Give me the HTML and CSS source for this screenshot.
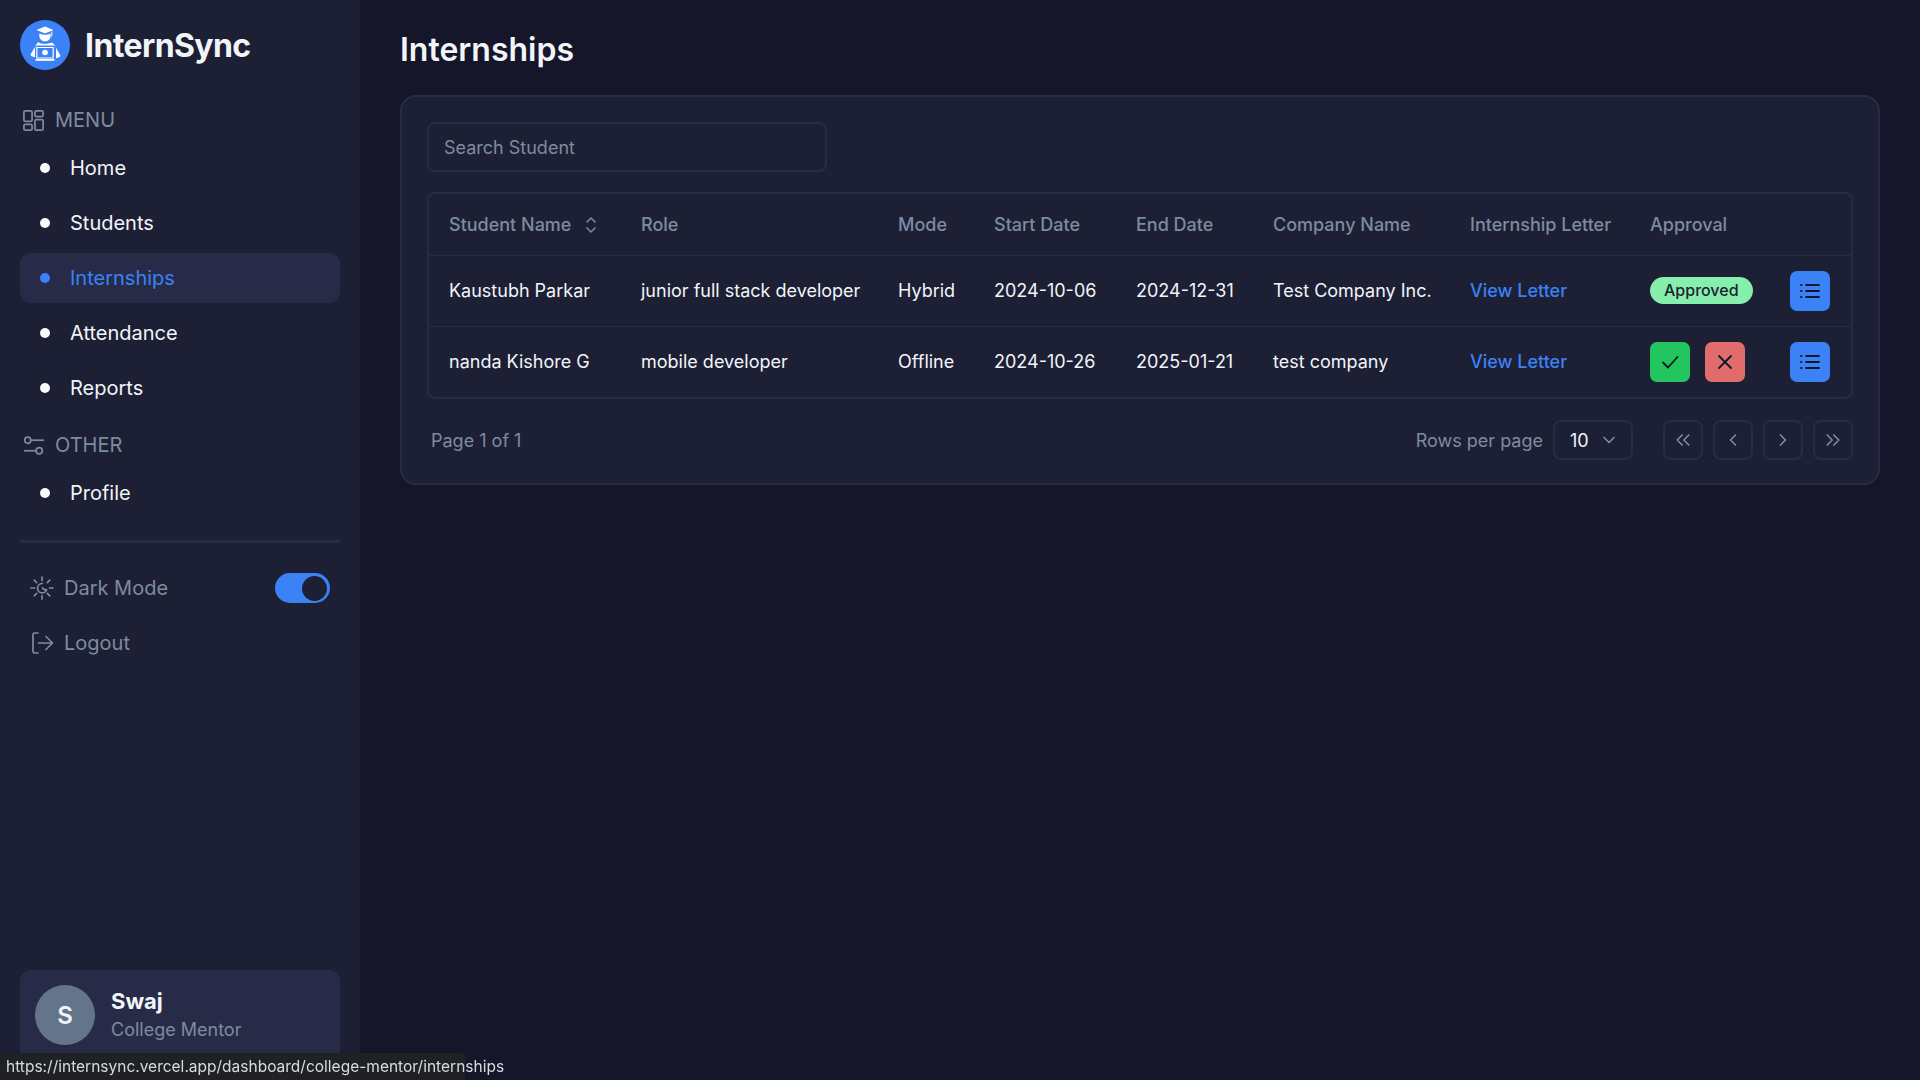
FILE: index.html
```html
<!DOCTYPE html>
<html>
<head>
	<title>InternSync</title>
	<link rel="stylesheet" href="styles.css">
</head>
<body>

	<div class="app">
		<aside class="sidebar">
			<div class="brand">
				<svg class="brand-logo" viewBox="0 0 50 50">
					<circle cx="25" cy="25" r="25" fill="#3b82f6"/>
					<path d="M25 6.5l8.5 3.6-8.5 3.4-8.5-3.4z" fill="#fff"/>
					<path d="M31.8 11.5v5" stroke="#fff" stroke-width="1" fill="none"/>
					<path d="M19.6 13.4c1.6.9 3.4 1.3 5.4 1.3s3.8-.4 5.4-1.3c.3.8.4 1.5.4 2.2a5.8 5.8 0 0 1-11.6 0c0-.7.1-1.4.4-2.2z" fill="#fff"/>
					<path d="M18.7 22.5c1.7 1 3.8 1.4 6.3 1.4s4.600-.4 6.300-1.400c1.500.5 2.500 1.400 3.200 2.700l5.500 9.500c.6 1.100.4 2.100-.7 2.500l-3.300 1V28c0-1.500-1-2.500-2.500-2.500H17.500c-1.500 0-2.500 1-2.500 2.500v9.200l-3.300-1c-1.100-.4-1.300-1.400-.7-2.500l5.500-9.500c.6-1.100 1.300-1.900 2.700-2.200z" fill="#fff"/>
					<rect x="16.500" y="27" width="17" height="11" rx="1" fill="#fff" opacity="0"/>
					<path d="M16.800 27.500h16.400v10.500H16.800z" fill="none" stroke="#fff" stroke-width="1.200"/>
					<circle cx="25" cy="32.500" r="2.800" fill="#fff"/>
					<rect x="15.500" y="39" width="19" height="1.800" fill="#fff"/>
				</svg>
				<span class="brand-name">InternSync</span>
			</div>

			<div class="nav-head">
				<svg class="icon-head" viewBox="0 0 24 24"><rect x="2" y="2" width="8.500" height="11" rx="1.500"/><rect x="13.500" y="2" width="8.500" height="6" rx="1.500"/><rect x="2" y="16" width="8.500" height="6" rx="1.500"/><rect x="13.500" y="11" width="8.500" height="11" rx="1.500"/></svg>
				MENU
			</div>
			<nav class="nav">
				<a class="nav-link"><span class="dot"></span>Home</a>
				<a class="nav-link"><span class="dot"></span>Students</a>
				<a class="nav-link active"><span class="dot"></span>Internships</a>
				<a class="nav-link"><span class="dot"></span>Attendance</a>
				<a class="nav-link"><span class="dot"></span>Reports</a>
			</nav>

			<div class="nav-head">
				<svg class="icon-head" viewBox="0 0 24 24"><circle cx="6" cy="6.500" r="3.200"/><path d="M9.500 6.500H23"/><circle cx="18" cy="17.500" r="3.200"/><path d="M14.500 17.500H2"/></svg>
				OTHER
			</div>
			<nav class="nav">
				<a class="nav-link"><span class="dot"></span>Profile</a>
			</nav>

			<div class="divider"></div>

			<div class="tool-row">
				<svg class="icon-tool" viewBox="0 0 24 24"><path d="M12 1v3.500M12 19.500V23M1 12h3.500M19.500 12H23M4.200 4.200l2.500 2.500M17.300 17.300l2.500 2.500M4.200 19.800l2.500-2.500M17.300 6.700l2.500-2.500"/><path d="M12.500 7.500a4.700 4.700 0 1 0 4.200 6.200 4 4 0 0 1-4.200-1.700"/></svg>
				<span>Dark Mode</span>
				<span class="toggle"><span class="toggle-knob"></span></span>
			</div>
			<div class="tool-row">
				<svg class="icon-tool" viewBox="0 0 24 24"><path d="M8 2H4.500C3.500 2 3 2.500 3 3.500v17c0 1 .5 1.500 1.500 1.500H8"/><path d="M8.500 12H22M16 5.500l6.500 6.500-6.500 6.500"/></svg>
				<span>Logout</span>
			</div>

			<div class="user-card">
				<div class="avatar">S</div>
				<div>
					<div class="user-name">Swaj</div>
					<div class="user-role">College Mentor</div>
				</div>
			</div>
		</aside>

		<main class="main">
			<h1 class="page-title">Internships</h1>

			<section class="card">
				<input class="search" type="text" placeholder="Search Student">

				<div class="table-wrap">
					<table class="table">
						<colgroup>
							<col class="c-name"><col class="c-role"><col class="c-mode"><col class="c-start"><col class="c-end"><col class="c-company"><col class="c-letter"><col class="c-approval"><col class="c-actions">
						</colgroup>
						<thead>
							<tr>
								<th>Student Name
									<svg class="icon-sort" viewBox="0 0 14 18"><path d="M2.500 6.500L7 2l4.500 4.500M2.500 11.500L7 16l4.500-4.500"/></svg>
								</th>
								<th>Role</th>
								<th>Mode</th>
								<th>Start Date</th>
								<th>End Date</th>
								<th>Company Name</th>
								<th>Internship Letter</th>
								<th>Approval</th>
								<th></th>
							</tr>
						</thead>
						<tbody>
							<tr>
								<td>Kaustubh Parkar</td>
								<td>junior full stack developer</td>
								<td>Hybrid</td>
								<td>2024-10-06</td>
								<td>2024-12-31</td>
								<td>Test Company Inc.</td>
								<td><a class="link">View Letter</a></td>
								<td><span class="badge">Approved</span></td>
								<td>
									<button class="btn btn-blue"><svg class="icon-btn" viewBox="0 0 24 24"><path d="M8 6h13M8 12h13M8 18h13M3 6h.5M3 12h.5M3 18h.5"/></svg></button>
								</td>
							</tr>
							<tr>
								<td>nanda Kishore G</td>
								<td>mobile developer</td>
								<td>Offline</td>
								<td>2024-10-26</td>
								<td>2025-01-21</td>
								<td>test company</td>
								<td><a class="link">View Letter</a></td>
								<td>
									<div class="btn-pair">
										<button class="btn btn-green"><svg class="icon-btn" viewBox="0 0 24 24"><path d="M5 12.500l5 5 9.500-10.500"/></svg></button>
										<button class="btn btn-red"><svg class="icon-btn" viewBox="0 0 24 24"><path d="M6 6l12 12M18 6L6 18"/></svg></button>
									</div>
								</td>
								<td>
									<button class="btn btn-blue"><svg class="icon-btn" viewBox="0 0 24 24"><path d="M8 6h13M8 12h13M8 18h13M3 6h.5M3 12h.5M3 18h.5"/></svg></button>
								</td>
							</tr>
						</tbody>
					</table>
				</div>

				<div class="pager">
					<span class="page-count">Page 1 of 1</span>
					<span class="rows-label">Rows per page</span>
					<div class="rows-select">10
						<svg class="icon-pg" viewBox="0 0 24 24"><path d="M6 9l6 6 6-6"/></svg>
					</div>
					<div class="pg-btns">
						<button class="pg-btn"><svg class="icon-pg" viewBox="0 0 24 24"><path d="M11 6l-6 6 6 6M19 6l-6 6 6 6"/></svg></button>
						<button class="pg-btn"><svg class="icon-pg" viewBox="0 0 24 24"><path d="M15 6l-6 6 6 6"/></svg></button>
						<button class="pg-btn"><svg class="icon-pg" viewBox="0 0 24 24"><path d="M9 6l6 6-6 6"/></svg></button>
						<button class="pg-btn"><svg class="icon-pg" viewBox="0 0 24 24"><path d="M5 6l6 6-6 6M13 6l6 6-6 6"/></svg></button>
					</div>
				</div>
			</section>
		</main>
	</div>

	<div class="status-bar">https://internsync.vercel.app/dashboard/college-mentor/internships</div>

</body>
</html>
```

FILE: styles.css
```css
* {box-sizing: border-box;}
html, body {height: 100%;}
body {margin: 0;background: #15162a;color: #f1f5f9;font-family: Inter, "Liberation Sans", sans-serif;overflow: hidden;}

.app {display: flex;height: 100vh;}

/* sidebar */
.sidebar {width: 360px;flex: none;display: flex;flex-direction: column;background: #1d1f34;padding: 20px;}
.brand {display: flex;align-items: center;gap: 15px;height: 50px;margin-bottom: 25px;}
.brand-logo {width: 50px;height: 50px;}
.brand-name {font-size: 32px;font-weight: 700;letter-spacing: -0.6px;}

.nav-head {display: flex;align-items: center;gap: 10px;height: 50px;padding-left: 2px;font-size: 20px;color: #7d8ba1;margin-bottom: -2px;}
.icon-head {width: 23px;height: 23px;fill: none;stroke: #7d8ba1;stroke-width: 1.800;}
.nav {display: flex;flex-direction: column;gap: 5px;margin-bottom: 7px;}
.nav-link {display: flex;align-items: center;gap: 20px;height: 50px;padding-left: 20px;border-radius: 10px;font-size: 20px;}
.dot {width: 10px;height: 10px;border-radius: 50%;background: #f8fafc;}
.nav-link.active {background: #272b48;color: #3b82f6;}
.nav-link.active .dot {background: #3b82f6;}

.divider {height: 3px;background: #272b48;margin: 15px 0 20px;}

.tool-row {display: flex;align-items: center;gap: 10px;height: 50px;padding: 0 10px;margin-bottom: 5px;font-size: 20px;color: #7d8ba1;}
.icon-tool {width: 24px;height: 24px;fill: none;stroke: #7d8ba1;stroke-width: 1.700;stroke-linecap: round;stroke-linejoin: round;}
.toggle {margin-left: auto;width: 55px;height: 30px;border-radius: 15px;background: #3b82f6;display: flex;align-items: center;justify-content: flex-end;padding-right: 3px;}
.toggle-knob {width: 25px;height: 25px;border-radius: 50%;background: #1d1f34;}

.user-card {margin-top: auto;display: flex;align-items: center;gap: 16px;height: 90px;padding: 0 15px;background: #272b48;border-radius: 10px;}
.avatar {width: 60px;height: 60px;border-radius: 50%;background: #64748b;display: flex;align-items: center;justify-content: center;font-size: 24px;font-weight: 600;}
.user-name {font-size: 22px;font-weight: 700;line-height: 30px;}
.user-role {font-size: 18px;color: #7d8ba1;line-height: 28px;}

/* main */
.main {flex: 1;padding: 0 40px;}
.page-title {font-size: 32px;font-weight: 600;line-height: 40px;margin: 30px 0 25px;}
.card {height: 390px;background: #1d1f34;border: 2px solid #272b48;border-radius: 16px;padding: 25px;}
.search {display: block;width: 400px;height: 50px;background: transparent;border: 2px solid #272b48;border-radius: 8px;padding: 0 15px;font: 18px Inter, sans-serif;color: #f1f5f9;outline: none;margin-bottom: 20px;}
.search::placeholder {color: #7d8ba1;opacity: 1;}

.table-wrap {border: 2px solid #272b48;border-radius: 8px;}
.table {width: 100%;table-layout: fixed;border-collapse: collapse;font-size: 18px;}
.c-name {width: 192px;}
.c-role {width: 257px;}
.c-mode {width: 96px;}
.c-start {width: 142px;}
.c-end {width: 137px;}
.c-company {width: 197px;}
.c-letter {width: 180px;}
.c-approval {width: 140px;}
.c-actions {width: 81px;}
.table th {height: 61px;padding: 0 20px;text-align: left;font-weight: 500;color: #7d8ba1;white-space: nowrap;}
.table td {height: 71px;padding: 0 20px;white-space: nowrap;}
.table tr {border-bottom: 1px solid #272b48;}
.table tbody tr:last-child {border-bottom: 0;}
.icon-sort {width: 14px;height: 18px;margin-left: 8px;vertical-align: -3px;fill: none;stroke: #7d8ba1;stroke-width: 1.500;}

.link {color: #3b82f6;font-weight: 500;}
.badge {display: inline-block;height: 27px;line-height: 27px;padding: 0 14px;border-radius: 14px;background: #86efac;color: #1d1f34;font-size: 16px;font-weight: 500;}

.btn {display: flex;align-items: center;justify-content: center;width: 40px;height: 40px;padding: 0;border: 0;border-radius: 7px;}
.btn-pair {display: flex;gap: 15px;}
.btn-blue {background: #3b82f6;}
.btn-green {background: #22c55e;}
.btn-red {background: #e06c6c;}
.icon-btn {width: 24px;height: 24px;fill: none;stroke: #14152a;stroke-width: 1.800;stroke-linecap: round;stroke-linejoin: round;}

.pager {display: flex;align-items: center;margin-top: 21px;padding-left: 4px;font-size: 18px;color: #7d8ba1;}
.rows-label {margin-left: auto;}
.rows-select {display: flex;align-items: center;justify-content: space-between;width: 80px;height: 40px;margin-left: 10px;padding: 0 12px 0 15px;border: 2px solid #272b48;border-radius: 8px;color: #f1f5f9;}
.pg-btns {display: flex;gap: 10px;margin-left: 30px;}
.pg-btn {display: flex;align-items: center;justify-content: center;width: 40px;height: 40px;padding: 0;background: transparent;border: 2px solid #272b48;border-radius: 8px;}
.icon-pg {width: 20px;height: 20px;fill: none;stroke: #7d8ba1;stroke-width: 2;stroke-linecap: round;stroke-linejoin: round;}

.status-bar {position: fixed;left: 0;bottom: 0;height: 27px;width: 465px;padding: 0 6px;background: #202124;border-top-right-radius: 4px;color: #d6dbe0;font-size: 15.500px;line-height: 28px;white-space: nowrap;}
```
